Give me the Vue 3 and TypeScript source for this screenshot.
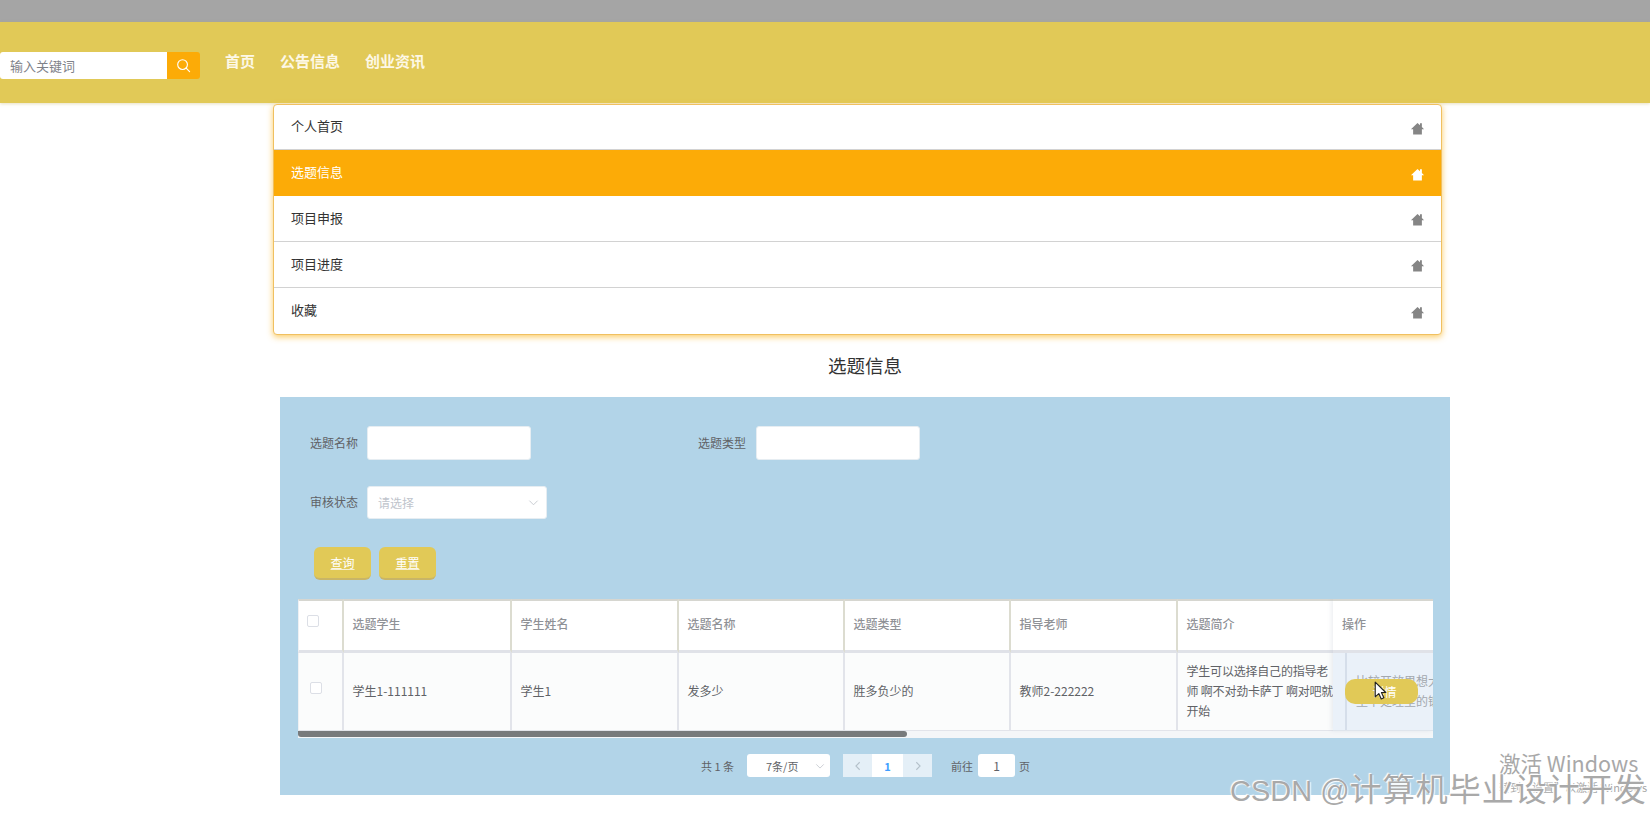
<script setup lang="ts">
const navItems: string[] = ['首页', '公告信息', '创业资讯']
const menuItems: { label: string; active: boolean }[] = [
  { label: '个人首页', active: false },
  { label: '选题信息', active: true },
  { label: '项目申报', active: false },
  { label: '项目进度', active: false },
  { label: '收藏', active: false }
]
const headers: string[] = ['选题学生', '学生姓名', '选题名称', '选题类型', '指导老师', '选题简介']
const row: string[] = ['学生1-111111', '学生1', '发多少', '胜多负少的', '教师2-222222', '学生可以选择自己的指导老师 啊不对劲卡萨丁 啊对吧就开始']
</script>

<template>
  <div class="page">
    <div class="strip"></div>
    <header class="header">
      <div class="search">
        <span class="search-input">输入关键词</span>
        <span class="search-btn">
          <svg viewBox="0 0 16 16" width="15" height="15" fill="none" stroke="#fff" stroke-width="1.2">
            <circle cx="7" cy="7" r="5.2" />
            <path d="M10.8 10.8 14.5 14.5" stroke-linecap="round" />
          </svg>
        </span>
      </div>
      <nav class="nav">
        <span v-for="item in navItems" :key="item" class="nav-item">{{ item }}</span>
      </nav>
    </header>

    <section class="menu">
      <div v-for="item in menuItems" :key="item.label" class="menu-row" :class="{ active: item.active }">
        <span class="menu-label">{{ item.label }}</span>
        <svg class="home" viewBox="0 0 24 24" width="15" height="15" fill="currentColor">
          <path d="M12 3 1.500 13H5v8.500h14V13h3.500L19 9.700V3.500h-3v3.300z" />
        </svg>
      </div>
    </section>

    <h2 class="title">选题信息</h2>

    <section class="panel">
      <div class="form-row first">
        <label class="label">选题名称</label>
        <span class="field name-field"></span>
        <label class="label second-label">选题类型</label>
        <span class="field name-field"></span>
      </div>
      <div class="form-row status">
        <label class="label">审核状态</label>
        <span class="field select-field">
          <span>请选择</span>
          <svg viewBox="0 0 12 12" width="11" height="11" fill="none" stroke="#c4c8ce" stroke-width="1">
            <path d="M1.500 4 6 8.500 10.500 4" />
          </svg>
        </span>
      </div>
      <div class="actions">
        <span class="btn">查询</span>
        <span class="btn">重置</span>
      </div>

      <div class="table">
        <div class="grid">
          <div class="th cb-cell"><i class="checkbox head-box"></i></div>
          <div v-for="h in headers" :key="h" class="th">{{ h }}</div>
          <div class="th"></div>
          <div class="td cb-cell"><i class="checkbox body-box"></i></div>
          <div v-for="(c, i) in row" :key="i" class="td" :class="{ intro: i === 5 }">{{ c }}</div>
          <div class="td"></div>
        </div>
        <div class="scroll-track"><div class="scroll-thumb"></div></div>
        <div class="fixed-col">
          <div class="fixed-head">操作</div>
          <div class="fixed-body">
            <div class="fixed-cell"><span class="fixed-text">比较开放思想大型下处理里的锻</span></div>
          </div>
          <span class="detail-btn">详情</span>
          <svg class="cursor" viewBox="0 0 12 18" width="13" height="19">
            <path d="M1 1v14l3.400-3.100L6.700 17l2.500-1.100-2.300-5H11z" fill="#fff" stroke="#222" stroke-width="1.100" stroke-linejoin="round" />
          </svg>
        </div>
      </div>

      <div class="pager">
        <span class="total">共 1 条</span>
        <span class="size">
          <span>7条/页</span>
          <svg viewBox="0 0 12 12" width="10" height="10" fill="none" stroke="#c4c8ce" stroke-width="1">
            <path d="M1.500 4 6 8.500 10.500 4" />
          </svg>
        </span>
        <span class="pages">
          <span class="pg">
            <svg viewBox="0 0 12 12" width="10" height="10" fill="none" stroke="#b4c0ca" stroke-width="1.300"><path d="M8 1.500 3.500 6 8 10.500" /></svg>
          </span>
          <span class="pg current">1</span>
          <span class="pg">
            <svg viewBox="0 0 12 12" width="10" height="10" fill="none" stroke="#b4c0ca" stroke-width="1.300"><path d="M4 1.500 8.500 6 4 10.500" /></svg>
          </span>
        </span>
        <span class="goto">前往</span>
        <span class="jump">1</span>
        <span class="unit">页</span>
      </div>
    </section>

    <div class="win-mark">
      <div class="win-title">激活 Windows</div>
      <div class="win-sub">转到“设置”以激活 Windows</div>
    </div>
    <div class="csdn">CSDN @<span class="csdn-cjk">计算机毕业设计开发</span></div>
  </div>
</template>

<style>
html,
body {
  margin: 0;
  overflow: hidden;
  background: #fff;
}
</style>

<style scoped>
.page {
  position: relative;
  width: 1650px;
  height: 822px;
  overflow: hidden;
  background: #fff;
  font-family: "Noto Sans CJK SC", "Liberation Sans", sans-serif;
  color: #333;
}
.strip {
  height: 22px;
  background: #a5a5a5;
}
.header {
  position: relative;
  z-index: 1;
  display: flex;
  align-items: flex-start;
  height: 81px;
  background: #e1c957;
  box-shadow: 0 1px 3px rgba(190, 170, 80, 0.35);
}
.search {
  display: flex;
  margin-top: 30px;
  height: 27px;
}
.search-input {
  display: flex;
  align-items: center;
  box-sizing: border-box;
  width: 167px;
  padding-left: 10px;
  background: #fff;
  border-radius: 3px 0 0 3px;
  font-size: 13px;
  color: #7f8289;
}
.search-btn {
  display: flex;
  align-items: center;
  justify-content: center;
  width: 33px;
  background: #fcab07;
  border-radius: 0 3px 3px 0;
}
.nav {
  display: flex;
  gap: 25px;
  margin: 27px 0 0 25px;
}
.nav-item {
  font-size: 15px;
  line-height: 24px;
  font-weight: 700;
  color: #fdf8e6;
}
.menu {
  position: relative;
  z-index: 2;
  box-sizing: border-box;
  width: 1169px;
  height: 231px;
  margin: 1px 0 0 273px;
  border: 1px solid #f0c060;
  border-radius: 4px;
  background: #fff;
  box-shadow: 0 2px 6px rgba(250, 190, 60, 0.8);
  overflow: hidden;
}
.menu-row {
  display: flex;
  align-items: center;
  justify-content: space-between;
  box-sizing: border-box;
  height: 46px;
  padding: 0 16px 0 17px;
  font-size: 13px;
  color: #333;
  border-bottom: 1px solid #d2d2d2;
}
.menu-label {
  padding-bottom: 3px;
}
.menu-row:first-child {
  height: 45px;
}
.menu-row:last-child {
  border-bottom: 0;
}
.menu-row.active {
  background: #fcab07;
  color: #fff;
  border-bottom: 0;
}
.home {
  color: #858585;
  margin-top: 2px;
}
.active .home {
  color: #fff;
}
.title {
  margin: 0 0 0 280px;
  width: 1170px;
  height: 62px;
  line-height: 60px;
  text-align: center;
  font-size: 18.5px;
  font-weight: 400;
  color: #333;
}
.panel {
  box-sizing: border-box;
  width: 1170px;
  height: 398px;
  margin-left: 280px;
  padding: 29px 17px 0 18px;
  background: #b2d4e8;
}
.form-row {
  display: flex;
  align-items: center;
  height: 33px;
}
.first {
  height: 34px;
}
.first .field {
  height: 34px;
}
.status {
  margin-top: 26px;
}
.label {
  width: 48px;
  margin: 0 9px 0 12px;
  padding-bottom: 1px;
  font-size: 12px;
  line-height: 20px;
  color: #606266;
  white-space: nowrap;
}
.second-label {
  margin: 0 10px 0 167px;
}
.field {
  box-sizing: border-box;
  display: block;
  height: 33px;
  background: #fff;
  border: 1px solid #e6edf2;
  border-radius: 3px;
}
.name-field {
  width: 164px;
}
.select-field {
  display: flex;
  align-items: center;
  justify-content: space-between;
  width: 180px;
  padding: 0 7px 0 10px;
  font-size: 12px;
  color: #c0c4cc;
}
.actions {
  display: flex;
  gap: 8px;
  margin: 28px 0 19px 16px;
}
.btn {
  box-sizing: border-box;
  display: flex;
  align-items: center;
  justify-content: center;
  width: 57px;
  height: 33px;
  border-radius: 6px;
  background: #e1c957;
  border-bottom: 2px solid #c9b566;
  font-size: 12px;
  color: #fff;
  text-decoration: underline;
  text-decoration-color: rgba(255, 255, 255, 0.7);
}
.table {
  position: relative;
  width: 1135px;
  height: 139px;
  overflow: hidden;
  background: #f4f6f8;
}
.grid {
  display: grid;
  grid-template-columns: 46px 168px 167px 166px 166px 167px 167px 200px;
  grid-template-rows: 54px 78px;
  width: 1227px;
}
.th {
  box-sizing: border-box;
  display: flex;
  align-items: center;
  padding: 0 0 5px 8.5px;
  background: #fff;
  border-top: 2px solid #d6d6d0;
  border-right: 2px solid #dcdcd0;
  border-bottom: 3px solid #e0e2e8;
  font-size: 12px;
  font-weight: 500;
  color: #8f9196;
}
.td {
  box-sizing: border-box;
  display: flex;
  align-items: center;
  padding: 0 6px 2px 8.5px;
  background: #fbfcfc;
  border-right: 2px solid #e2e4ea;
  border-bottom: 1px solid #e2e4ea;
  font-size: 12px;
  color: #606266;
}
.cb-cell {
  border-left: 1px solid #eef0f3;
  padding: 0;
  position: relative;
}
.intro {
  line-height: 20px;
  letter-spacing: -0.2px;
}
.checkbox {
  position: absolute;
  display: block;
  box-sizing: border-box;
  width: 12px;
  height: 12px;
  border: 1px solid #dcdfe6;
  border-radius: 2px;
  background: #fff;
}
.head-box {
  left: 8px;
  top: 14px;
}
.body-box {
  left: 11px;
  top: 29px;
}
.scroll-track {
  height: 7px;
  background: #f4f6f8;
}
.scroll-thumb {
  width: 609px;
  height: 6px;
  background: #777a7c;
  border-radius: 0 3px 3px 3px;
}
.fixed-col {
  position: absolute;
  top: 0;
  right: 0;
  width: 100px;
  height: 132px;
  box-shadow: -2px 0 4px rgba(170, 180, 195, 0.2);
}
.fixed-head {
  box-sizing: border-box;
  display: flex;
  align-items: center;
  height: 54px;
  padding: 0 0 5px 9px;
  background: #fff;
  border-top: 2px solid #d6d6d0;
  border-bottom: 3px solid #e0e2e8;
  font-size: 12px;
  font-weight: 500;
  color: #8f9196;
}
.fixed-body {
  box-sizing: border-box;
  height: 78px;
  padding-left: 12px;
  background: #eaf1f9;
  border-bottom: 1px solid #dfe5ec;
}
.fixed-cell {
  box-sizing: border-box;
  display: flex;
  align-items: center;
  width: 88px;
  height: 77px;
  padding: 0 0 2px 9px;
  border-left: 2px solid #d5deea;
  overflow: hidden;
}
.fixed-text {
  flex: none;
  width: 86px;
  font-size: 12px;
  line-height: 20px;
  color: #a3a8ae;
}
.detail-btn {
  position: absolute;
  left: 12px;
  top: 80px;
  display: flex;
  align-items: center;
  justify-content: center;
  width: 73px;
  height: 25px;
  padding-left: 6px;
  box-sizing: border-box;
  border-radius: 10px;
  background: #e1c957;
  font-size: 12px;
  color: #fff;
}
.cursor {
  position: absolute;
  left: 41px;
  top: 82px;
}
.pager {
  display: flex;
  align-items: center;
  height: 23px;
  margin: 16px 0 0 403px;
  font-size: 11px;
  color: #606266;
}
.total {
  width: 46px;
}
.size {
  box-sizing: border-box;
  display: flex;
  align-items: center;
  justify-content: space-between;
  width: 83px;
  height: 23px;
  padding: 0 5px 0 19px;
  background: #fff;
  border-radius: 3px;
}
.pages {
  display: flex;
  margin-left: 13px;
}
.pg {
  display: flex;
  align-items: center;
  justify-content: center;
  width: 29px;
  height: 23px;
  background: #e4eff7;
}
.current {
  width: 31px;
  background: #fff;
  color: #409eff;
  font-weight: 700;
}
.goto {
  margin-left: 19px;
}
.jump {
  box-sizing: border-box;
  width: 37px;
  height: 23px;
  margin-left: 5px;
  line-height: 23px;
  text-align: center;
  background: #fff;
  border-radius: 3px;
  font-size: 12px;
}
.unit {
  margin-left: 4px;
}
.win-mark {
  position: absolute;
  left: 1499px;
  top: 749px;
  white-space: nowrap;
  color: #a8a8a8;
}
.win-title {
  font-size: 21.5px;
  line-height: 28px;
}
.win-sub {
  font-size: 11px;
  line-height: 20px;
}
.csdn {
  position: absolute;
  left: 1230px;
  top: 769px;
  font-family: "Liberation Sans", "Noto Sans CJK SC", sans-serif;
  font-size: 29px;
  line-height: 42px;
  white-space: nowrap;
  color: #a9a9a9;
  text-shadow: 1px 1px 1px #fff, -1px -1px 1px #fff;
}
.csdn-cjk {
  font-size: 32px;
  letter-spacing: 1px;
}
</style>
